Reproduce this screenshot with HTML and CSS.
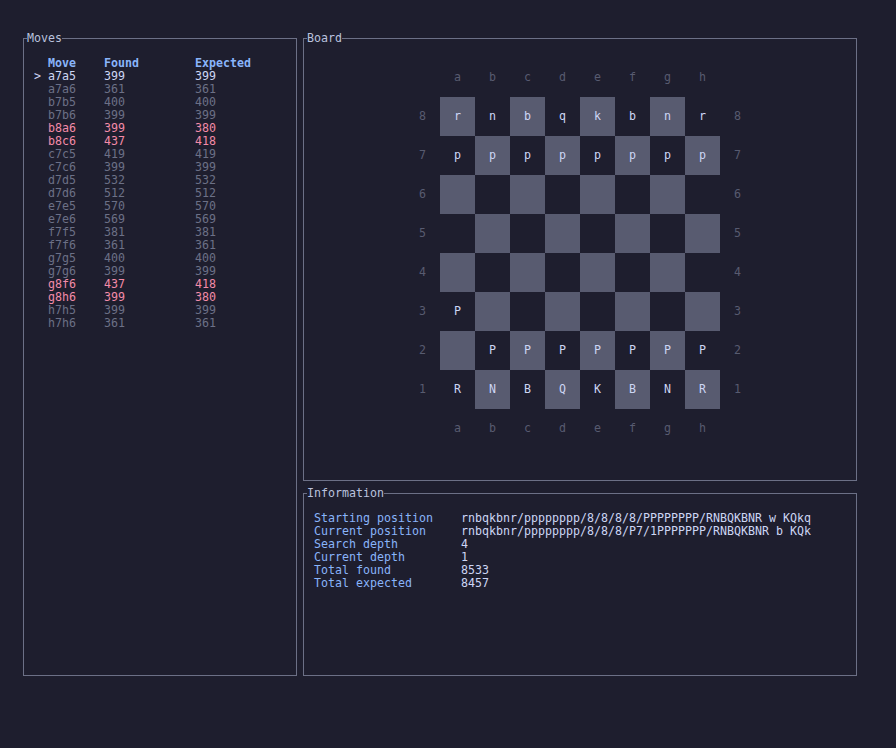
FILE: index.html
```html
<!DOCTYPE html>
<html>
<head>
<meta charset="utf-8">
<link rel="stylesheet" href="styles.css">
</head>
<body>
<div class="screen">
  <fieldset class="panel moves">
    <legend>Moves</legend>
    <div class="moves-table">
      <div class="mrow head"><span class="cur"></span><span>Move</span><span>Found</span><span>Expected</span></div>
      <div class="mrow sel"><span class="cur">&gt;</span><span>a7a5</span><span>399</span><span>399</span></div>
      <div class="mrow"><span class="cur"></span><span>a7a6</span><span>361</span><span>361</span></div>
      <div class="mrow"><span class="cur"></span><span>b7b5</span><span>400</span><span>400</span></div>
      <div class="mrow"><span class="cur"></span><span>b7b6</span><span>399</span><span>399</span></div>
      <div class="mrow bad"><span class="cur"></span><span>b8a6</span><span>399</span><span>380</span></div>
      <div class="mrow bad"><span class="cur"></span><span>b8c6</span><span>437</span><span>418</span></div>
      <div class="mrow"><span class="cur"></span><span>c7c5</span><span>419</span><span>419</span></div>
      <div class="mrow"><span class="cur"></span><span>c7c6</span><span>399</span><span>399</span></div>
      <div class="mrow"><span class="cur"></span><span>d7d5</span><span>532</span><span>532</span></div>
      <div class="mrow"><span class="cur"></span><span>d7d6</span><span>512</span><span>512</span></div>
      <div class="mrow"><span class="cur"></span><span>e7e5</span><span>570</span><span>570</span></div>
      <div class="mrow"><span class="cur"></span><span>e7e6</span><span>569</span><span>569</span></div>
      <div class="mrow"><span class="cur"></span><span>f7f5</span><span>381</span><span>381</span></div>
      <div class="mrow"><span class="cur"></span><span>f7f6</span><span>361</span><span>361</span></div>
      <div class="mrow"><span class="cur"></span><span>g7g5</span><span>400</span><span>400</span></div>
      <div class="mrow"><span class="cur"></span><span>g7g6</span><span>399</span><span>399</span></div>
      <div class="mrow bad"><span class="cur"></span><span>g8f6</span><span>437</span><span>418</span></div>
      <div class="mrow bad"><span class="cur"></span><span>g8h6</span><span>399</span><span>380</span></div>
      <div class="mrow"><span class="cur"></span><span>h7h5</span><span>399</span><span>399</span></div>
      <div class="mrow"><span class="cur"></span><span>h7h6</span><span>361</span><span>361</span></div>
    </div>
  </fieldset>
  <div class="right">
    <fieldset class="panel board-panel">
      <legend>Board</legend>
      <div class="board">
        <span class="corner"></span>
        <span class="file top">a</span><span class="file top">b</span><span class="file top">c</span><span class="file top">d</span><span class="file top">e</span><span class="file top">f</span><span class="file top">g</span><span class="file top">h</span>
        <span class="corner"></span>

        <span class="rank left">8</span>
        <span class="sq light">r</span><span class="sq">n</span><span class="sq light">b</span><span class="sq">q</span><span class="sq light">k</span><span class="sq">b</span><span class="sq light">n</span><span class="sq">r</span>
        <span class="rank right">8</span>

        <span class="rank left">7</span>
        <span class="sq">p</span><span class="sq light">p</span><span class="sq">p</span><span class="sq light">p</span><span class="sq">p</span><span class="sq light">p</span><span class="sq">p</span><span class="sq light">p</span>
        <span class="rank right">7</span>

        <span class="rank left">6</span>
        <span class="sq light"></span><span class="sq"></span><span class="sq light"></span><span class="sq"></span><span class="sq light"></span><span class="sq"></span><span class="sq light"></span><span class="sq"></span>
        <span class="rank right">6</span>

        <span class="rank left">5</span>
        <span class="sq"></span><span class="sq light"></span><span class="sq"></span><span class="sq light"></span><span class="sq"></span><span class="sq light"></span><span class="sq"></span><span class="sq light"></span>
        <span class="rank right">5</span>

        <span class="rank left">4</span>
        <span class="sq light"></span><span class="sq"></span><span class="sq light"></span><span class="sq"></span><span class="sq light"></span><span class="sq"></span><span class="sq light"></span><span class="sq"></span>
        <span class="rank right">4</span>

        <span class="rank left">3</span>
        <span class="sq">P</span><span class="sq light"></span><span class="sq"></span><span class="sq light"></span><span class="sq"></span><span class="sq light"></span><span class="sq"></span><span class="sq light"></span>
        <span class="rank right">3</span>

        <span class="rank left">2</span>
        <span class="sq light"></span><span class="sq">P</span><span class="sq light">P</span><span class="sq">P</span><span class="sq light">P</span><span class="sq">P</span><span class="sq light">P</span><span class="sq">P</span>
        <span class="rank right">2</span>

        <span class="rank left">1</span>
        <span class="sq">R</span><span class="sq light">N</span><span class="sq">B</span><span class="sq light">Q</span><span class="sq">K</span><span class="sq light">B</span><span class="sq">N</span><span class="sq light">R</span>
        <span class="rank right">1</span>

        <span class="corner"></span>
        <span class="file bottom">a</span><span class="file bottom">b</span><span class="file bottom">c</span><span class="file bottom">d</span><span class="file bottom">e</span><span class="file bottom">f</span><span class="file bottom">g</span><span class="file bottom">h</span>
        <span class="corner"></span>
      </div>
    </fieldset>
    <fieldset class="panel info">
      <legend>Information</legend>
      <div class="info-table">
        <span class="key">Starting position</span><span class="val">rnbqkbnr/pppppppp/8/8/8/8/PPPPPPPP/RNBQKBNR w KQkq</span>
        <span class="key">Current position</span><span class="val">rnbqkbnr/pppppppp/8/8/8/P7/1PPPPPPP/RNBQKBNR b KQk</span>
        <span class="key">Search depth</span><span class="val">4</span>
        <span class="key">Current depth</span><span class="val">1</span>
        <span class="key">Total found</span><span class="val">8533</span>
        <span class="key">Total expected</span><span class="val">8457</span>
      </div>
    </fieldset>
  </div>
</div>
</body>
</html>
```

FILE: styles.css
```css
html, body {
  margin: 0;
  padding: 0;
  background: #1e1e2e;
}

body {
  font-family: "DejaVu Sans Mono", monospace;
  font-size: 11.63px;
  line-height: 13px;
  color: #cdd6f4;
  width: 896px;
  height: 748px;
  overflow: hidden;
}

.screen {
  display: flex;
  gap: 6px;
  padding: 32px 0 0 23px;
}

.panel {
  margin: 0;
  padding: 0;
  border: 1px solid #6c7086;
  min-width: 0;
  box-sizing: border-box;
}

.panel > legend {
  padding: 0;
  margin-left: 3px;
  line-height: 13px;
  color: #bac2de;
}

/* Moves */
.moves {
  width: 274px;
  height: 644px;
}

.moves-table {
  padding: 12px 0 0 10px;
}

.mrow {
  display: grid;
  grid-template-columns: 14px 56px 91px auto;
  white-space: pre;
  color: #6c7086;
}

.mrow.head {
  color: #89b4fa;
  font-weight: bold;
}

.mrow.sel {
  color: #cdd6f4;
}

.mrow.bad {
  color: #f38ba8;
}

/* Right column */
.right {
  display: flex;
  flex-direction: column;
  gap: 6px;
}

.board-panel {
  width: 554px;
  height: 449px;
}

.board {
  display: grid;
  grid-template-columns: 21px repeat(8, 35px) 21px;
  grid-template-rows: 26px repeat(8, 39px) 26px;
  width: 322px;
  margin: 26px auto 0;
}

.file {
  text-align: center;
  color: #585b70;
}

.file.bottom {
  align-self: end;
}

.rank {
  align-self: center;
  color: #585b70;
}

.rank.right {
  text-align: right;
}

.sq {
  display: flex;
  align-items: center;
  justify-content: center;
  color: #cdd6f4;
}

.sq.light {
  background: #585b70;
}

/* Information */
.info {
  width: 554px;
  height: 189px;
}

.info-table {
  display: grid;
  grid-template-columns: 147px auto;
  white-space: pre;
  padding: 12px 0 0 10px;
}

.key {
  color: #89b4fa;
}

.val {
  color: #cdd6f4;
}
```
